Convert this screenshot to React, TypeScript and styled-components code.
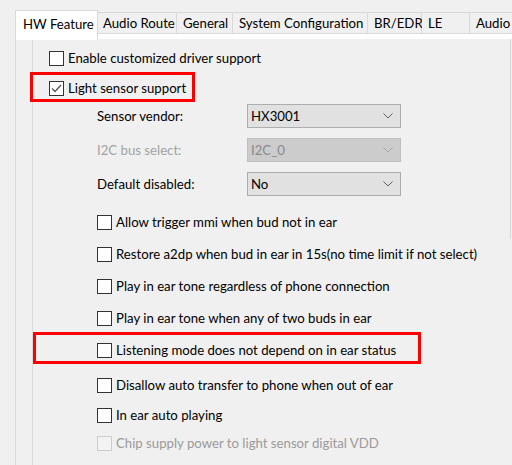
import React from "react";
import styled, { createGlobalStyle } from "styled-components";

const Global = createGlobalStyle`
  html, body { margin: 0; padding: 0; background: #f0f0f0; }
  body { font-family: Lato, "Segoe UI", Arial, sans-serif; font-size: 13.2px; color: #000; }
  #root { width: 512px; height: 465px; overflow: hidden; }
`;

const Page = styled.div`
  width: 512px;
  height: 465px;
  box-sizing: border-box;
  padding: 10px 0 0 15px;
  display: flex;
  flex-direction: column;
  overflow: hidden;
`;

const TabBar = styled.div`
  display: flex;
  align-items: flex-start;
  height: 24px;
  position: relative;
  z-index: 1;
`;

const Tab = styled.div<{ $w: number; $pl: number; $active?: boolean }>`
  flex: none;
  box-sizing: border-box;
  width: ${(p) => p.$w}px;
  padding-left: ${(p) => p.$pl}px;
  display: flex;
  align-items: center;
  white-space: nowrap;
  ${(p) =>
    p.$active
      ? `height: 30px; background: #fff; border: 1px solid #d9d9d9; border-bottom: none; padding-bottom: 4px;`
      : `height: 22px; margin-top: 2px; background: #f0f0f0; border: 1px solid #d9d9d9; border-left: none;`}
`;

const Panel = styled.div`
  flex: 1;
  border-left: 1px solid #d9d9d9;
  border-top: 1px solid #d9d9d9;
  margin-top: -1px;
  background: #fff;
  padding-top: 5px;
  display: flex;
  flex-direction: column;
`;

const Body = styled.div`
  flex: 1;
  background: #f0f0f0;
  display: flex;
  padding-left: 16px;
`;

const Content = styled.div`
  flex: 1;
  border-left: 1px solid #dadada;
  padding-left: 16px;
  display: flex;
  flex-direction: column;
`;

const Edge = styled.div`
  flex: none;
  width: 1px;
  height: 200px;
  background: #d9d9d9;
  margin-right: 1px;
`;

const Row = styled.div<{ $mt: number; $indent?: boolean }>`
  position: relative;
  display: flex;
  align-items: center;
  height: 24px;
  margin-top: ${(p) => p.$mt}px;
  margin-left: ${(p) => (p.$indent ? 48 : 0)}px;
  white-space: nowrap;
`;

const Box = styled.span<{ $disabled?: boolean }>`
  flex: none;
  box-sizing: border-box;
  width: 15px;
  height: 15px;
  border: 1px solid ${(p) => (p.$disabled ? "#cccccc" : "#333333")};
  background: ${(p) => (p.$disabled ? "#f3f3f3" : "#ffffff")};
  display: flex;
  align-items: center;
  justify-content: center;
  margin-right: 4px;
`;

const Label = styled.span<{ $disabled?: boolean }>`
  color: ${(p) => (p.$disabled ? "#9a9a9a" : "#000")};
`;

const FieldLabel = styled.span<{ $disabled?: boolean }>`
  width: 150px;
  flex: none;
  color: ${(p) => (p.$disabled ? "#a2a2a2" : "#000")};
`;

const Select = styled.div<{ $disabled?: boolean }>`
  box-sizing: border-box;
  width: 154px;
  height: 24px;
  border: 1px solid ${(p) => (p.$disabled ? "#bfbfbf" : "#adadad")};
  background: ${(p) => (p.$disabled ? "#cccccc" : "#e1e1e1")};
  color: ${(p) => (p.$disabled ? "#8a8a8a" : "#000")};
  display: flex;
  align-items: center;
  justify-content: space-between;
  padding: 0 7px 0 3px;
`;

const Highlight = styled.div<{ $l: number; $t: number; $w: number; $h: number }>`
  position: absolute;
  left: ${(p) => p.$l}px;
  top: ${(p) => p.$t}px;
  width: ${(p) => p.$w}px;
  height: ${(p) => p.$h}px;
  box-sizing: border-box;
  border: 3px solid #ff0000;
  pointer-events: none;
`;

const Chevron = ({ disabled }: { disabled?: boolean }) => (
  <svg width="10" height="6" viewBox="0 0 10 6">
    <polyline points="0.5,0.5 5,5 9.5,0.5" fill="none" stroke={disabled ? "#a8a8a8" : "#606060"} strokeWidth="1" />
  </svg>
);

const Check = () => (
  <svg width="13" height="13" viewBox="0 0 13 13">
    <polyline points="2,6.5 5,9.5 11,3" fill="none" stroke="#555" strokeWidth="1.3" />
  </svg>
);

type CB = { text: string; mt: number; checked?: boolean; disabled?: boolean; indent?: boolean; hl?: [number, number, number, number] };

const CheckRow = ({ text, mt, checked, disabled, indent, hl }: CB) => (
  <Row $mt={mt} $indent={indent}>
    <Box $disabled={disabled}>{checked && <Check />}</Box>
    <Label $disabled={disabled}>{text}</Label>
    {hl && <Highlight $l={hl[0]} $t={hl[1]} $w={hl[2]} $h={hl[3]} />}
  </Row>
);

const SelectRow = ({ label, value, mt, disabled }: { label: string; value: string; mt: number; disabled?: boolean }) => (
  <Row $mt={mt} $indent>
    <FieldLabel $disabled={disabled}>{label}</FieldLabel>
    <Select $disabled={disabled}>
      <span>{value}</span>
      <Chevron disabled={disabled} />
    </Select>
  </Row>
);

const tabs: [string, number, number][] = [
  ["Audio Route", 79, 5],
  ["General", 56, 6],
  ["System Configuration", 135, 6],
  ["BR/EDR", 54, 6],
  ["LE", 48, 6],
  ["Audio", 60, 6],
];

export default function App() {
  return (
    <>
      <Global />
      <Page>
        <TabBar>
          <Tab $w={83} $pl={7} $active>HW Feature</Tab>
          {tabs.map(([t, w, pl]) => (
            <Tab key={t} $w={w} $pl={pl}>{t}</Tab>
          ))}
        </TabBar>
        <Panel>
          <Body>
            <Content>
              <CheckRow mt={7} text="Enable customized driver support" />
              <CheckRow mt={6} text="Light sensor support" checked hl={[-19, -4, 165, 30]} />
              <SelectRow mt={4} label="Sensor vendor:" value="HX3001" />
              <SelectRow mt={10} label="I2C bus select:" value="I2C_0" disabled />
              <SelectRow mt={10} label="Default disabled:" value="No" />
              <CheckRow mt={14} indent text="Allow trigger mmi when bud not in ear" />
              <CheckRow mt={8} indent text="Restore a2dp when bud in ear in 15s(no time limit if not select)" />
              <CheckRow mt={8} indent text="Play in ear tone regardless of phone connection" />
              <CheckRow mt={8} indent text="Play in ear tone when any of two buds in ear" />
              <CheckRow mt={8} indent text="Listening mode does not depend on in ear status" hl={[-64, -6, 388, 32]} />
              <CheckRow mt={11} indent text="Disallow auto transfer to phone when out of ear" />
              <CheckRow mt={6} indent text="In ear auto playing" />
              <CheckRow mt={4} indent disabled text="Chip supply power to light sensor digital VDD" />
            </Content>
            <Edge />
          </Body>
        </Panel>
      </Page>
    </>
  );
}
